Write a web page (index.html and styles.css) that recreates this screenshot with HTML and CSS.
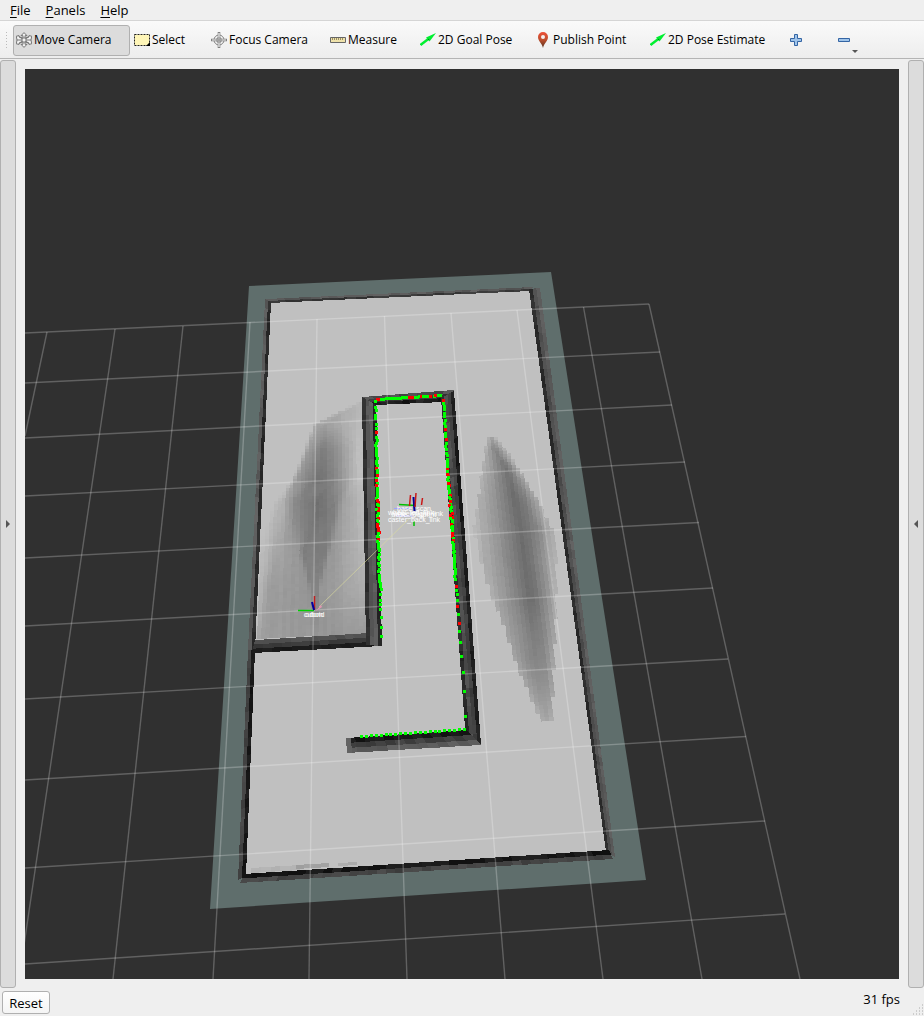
FILE: index.html
```html
<!DOCTYPE html>
<html lang="en">
<head>
<meta charset="utf-8">
<title>RViz</title>
<link rel="stylesheet" href="styles.css">
</head>
<body>
<nav class="menubar" aria-label="Main menu">
  <button class="menu" type="button"><u>F</u>ile</button>
  <button class="menu" type="button"><u>P</u>anels</button>
  <button class="menu" type="button"><u>H</u>elp</button>
</nav>
<div class="toolbar" role="toolbar" aria-label="Tools">
  <span class="grip"></span>
  <button class="tool tool-move active" type="button" aria-pressed="true">
    <svg class="icon" viewBox="0 0 16 16" fill="#f2f2f2" stroke="#6a6a6a" stroke-width=".9"><path d="M8 .6l3 3.100H9v2.500l4-1.500V3.600l2.700.6-.7 3.800.7 3.800-2.700.6v-1.100l-4-1.500v2.500h2l-3 3.100-3-3.100h2V9.800l-4 1.500v1.100L.3 11.800 1 8 .3 4.200 3 3.600v1.100l4 1.500V3.700H5z"/><path fill="none" d="M3 4.700L13 11.300M13 4.700L3 11.300M1 8h14"/><path d="M8 5.500L10.500 8 8 10.500 5.500 8z"/></svg>
    <span>Move Camera</span>
  </button>
  <button class="tool tool-select" type="button">
    <svg class="icon" viewBox="0 0 16 16"><path d="M.5 2.500h15v11H.5z" fill="#fff6b8" stroke="#222" stroke-dasharray="2 1"/><path d="M16 10v4h-4z" fill="#000"/></svg>
    <span>Select</span>
  </button>
  <button class="tool tool-focus" type="button">
    <svg class="icon" viewBox="0 0 16 16" fill="none" stroke="#808080"><circle cx="8" cy="8" r="5"/><circle cx="8" cy="8" r="2.500"/><path stroke-width="2.600" d="M8 0v16M0 8h16"/><path stroke="#f4f4f4" stroke-width="1.200" d="M8 1v14M1 8h14"/><path d="M8 5v6M5 8h6" stroke-width=".8"/></svg>
    <span>Focus Camera</span>
  </button>
  <button class="tool tool-measure" type="button">
    <svg class="icon" viewBox="0 0 16 16"><path d="M.5 5.500h15v5H.5z" fill="#efe2ab" stroke="#666"/><path d="M2.500 6v2M4.500 6v2M6.500 6v2M8.500 6v2M10.500 6v2M12.500 6v2" stroke="#998e62"/></svg>
    <span>Measure</span>
  </button>
  <button class="tool tool-goal" type="button">
    <svg class="icon" viewBox="0 0 16 16"><path d="M.5 13L8 7.200" stroke="#00f030" stroke-width="2.400"/><path d="M16 1L6 5.500l3.500 4z" fill="#00f030"/><path d="M7.500 6.800l2 .3-1 1.200z" fill="#087020"/></svg>
    <span>2D Goal Pose</span>
  </button>
  <button class="tool tool-publish" type="button">
    <svg class="icon" viewBox="0 0 16 16"><defs><linearGradient id="pin" x2="0" y2="1"><stop stop-color="#ef5138"/><stop offset=".5" stop-color="#bb4d2d"/><stop offset="1" stop-color="#54321f"/></linearGradient></defs><path d="M8 0a5 5 0 0 1 5 5c0 4-4 6-5 11-1-5-5-7-5-11a5 5 0 0 1 5-5z" fill="url(#pin)"/><circle cx="8" cy="5" r="2" fill="#f5eeee"/></svg>
    <span>Publish Point</span>
  </button>
  <button class="tool tool-estimate" type="button">
    <svg class="icon" viewBox="0 0 16 16"><path d="M.5 13L8 7.200" stroke="#00f030" stroke-width="2.400"/><path d="M16 1L6 5.500l3.500 4z" fill="#00f030"/><path d="M7.500 6.800l2 .3-1 1.200z" fill="#087020"/></svg>
    <span>2D Pose Estimate</span>
  </button>
  <button class="tool tool-add" type="button" aria-label="Add tool">
    <svg class="icon" viewBox="0 0 16 16"><path d="M6.500 2.500h3v4h4v3h-4v4h-3v-4h-4v-3h4z" fill="#9fc4ea" stroke="#3465a4"/></svg>
  </button>
  <button class="tool tool-remove" type="button" aria-label="Remove tool">
    <svg class="icon" viewBox="0 0 16 16"><path d="M2.500 6.500h11v3h-11z" fill="#9fc4ea" stroke="#3465a4"/></svg>
    <svg class="caret" viewBox="0 0 6 3"><path d="M0 0h6L3 3z" fill="#555"/></svg>
  </button>
</div>
<main class="workspace">
  <button class="dock" type="button" aria-label="Show left panels"><svg class="arrow" viewBox="0 0 4 8"><path d="M0 0l4 4-4 4z" fill="#555"/></svg></button>
  <div class="viewport">
    <svg class="scene" viewBox="25 69 874 910" preserveAspectRatio="xMidYMid slice" role="img" aria-label="3D map view">
      <path d="M249 286L551 272L646 880L210 909z" fill="#5f6e6c"/>
      <path d="M270 301L530 289L608 853L244 876L254 652z" fill="#c0c0c0"/>
      <g id="shade" shape-rendering="crispEdges"></g>
      <g id="walls" shape-rendering="crispEdges"></g>
      <g stroke="#fff" stroke-opacity=".24" stroke-width="1.400" id="grid"></g>
      <path d="M319 607L413 515" stroke="#dede9c" stroke-opacity=".6"/>
      <path d="M316 611l5-6 1 2z" fill="#e496b4"/>
      <g id="points" shape-rendering="crispEdges"></g>
      <g fill="none">
        <path d="M298 610.500h16" stroke="#00d000" stroke-width="1.500"/><path d="M314.500 596v14" stroke="#c02020" stroke-width="1.500"/><path d="M312 602l2 8" stroke="#0000a0" stroke-width="2"/>
        <path d="M399 504.500l17 1M414 521v5" stroke="#00c000" stroke-width="1.500"/><path d="M413.500 497l1 14" stroke="#000096" stroke-width="2"/><path d="M410.500 495l-1 11M416 493l-1 14M422.500 498l-1 7" stroke="#c81818" stroke-width="1.500"/><path d="M394 508.500h17M396 516h17" stroke="#a0a0ff"/>
      </g>
      <g class="frame-label">
        <text x="414" y="511">base_scan</text>
        <text x="411" y="515">wheel_left_link</text>
        <text x="418" y="516">wheel_right_link</text>
        <text x="414" y="517">base_footprint</text>
        <text x="414" y="522">caster_back_link</text>
        <text x="314" y="617">odom</text>
        <text x="314" y="617">cuboid</text>
      </g>
    </svg>
  </div>
  <button class="dock" type="button" aria-label="Show right panels"><svg class="arrow" viewBox="0 0 4 8"><path d="M4 0L0 4l4 4z" fill="#555"/></svg></button>
</main>
<footer class="statusbar">
  <button class="reset" type="button">Reset</button>
  <span class="fps">31 fps</span>
  <svg class="sizegrip" viewBox="0 0 12 12"><path d="M10 1h1M7 4h1M10 4h1M4 7h1M7 7h1M10 7h1M1 10h1M4 10h1M7 10h1M10 10h1" stroke="#aaa"/></svg>
</footer>
<script src="scene.js"></script>
</body>
</html>
```
FILE: styles.css
```css
* { box-sizing: border-box; }
body {
  margin: 0;
  min-height: 100vh;
  display: flex;
  flex-direction: column;
  background: #efefef;
  color: #000;
  font-family: "Open Sans", "Noto Sans", sans-serif;
  font-size: 12px;
  line-height: 16px;
}
button { font: inherit; color: inherit; background: none; border: 0; padding: 0; }
.menubar { display: flex; gap: 15px; padding: 2px 10px; height: 20px; flex: none; font-size: 13px; }
.menubar u { text-underline-offset: 2px; }
.toolbar {
  display: flex;
  align-items: center;
  flex: none;
  height: 39px;
  padding-top: 1px;
  padding-left: 5px;
  border-top: 1px solid #d5d5d5;
  border-bottom: 1px solid #b4b4b4;
  background: linear-gradient(#fafafa, #ededed);
}
.grip { width: 8px; height: 18px; flex: none; background: radial-gradient(circle, #bbb 0 1px, transparent 1px) 0 0 / 3px 3px; background-clip: content-box; padding-right: 4px; }
.tool {
  position: relative;
  display: flex;
  align-items: center;
  flex: none;
  gap: 2px;
  height: 31px;
  padding-left: 3px;
  border: 1px solid transparent;
  border-radius: 3px;
  white-space: nowrap;
}
.active { background: #dcdcdc; border-color: #b0b0b0; padding-left: 2px; }
.icon { width: 16px; height: 16px; flex: none; }
.tool-move { width: 117px; }
.tool-select { width: 77px; }
.tool-focus { width: 119px; }
.tool-measure { width: 90px; }
.tool-goal { width: 115px; }
.tool-publish { width: 115px; }
.tool-estimate { width: 138px; }
.tool-add { width: 48px; }
.tool-remove { width: 30px; }
.caret { position: absolute; right: 3px; bottom: 2px; width: 6px; height: 3px; }
.workspace { flex: 1; display: flex; gap: 9px; padding-top: 1px; }
.dock {
  flex: none;
  width: 16px;
  display: grid;
  place-items: center;
  background: #dcdcdc;
  border: 1px solid #b0b0b0;
  border-radius: 3px;
}
.arrow { width: 4px; height: 8px; }
.viewport { flex: 1; min-width: 0; display: flex; margin: 9px 0; background: #303030; }
.scene { flex: 1; min-width: 0; width: 100%; min-height: 300px; }
.frame-label { fill: #fff; font: 7px "Liberation Sans", sans-serif; text-anchor: middle; }
.statusbar { position: relative; flex: none; display: flex; justify-content: space-between; align-items: flex-start; height: 28px; padding: 3px 24px 2px 2px; font-size: 13px; }
.reset { width: 48px; height: 23px; border: 1px solid #b0b0b0; border-radius: 3px; background: linear-gradient(#fff, #f4f4f4); }
.sizegrip { position: absolute; right: 0; bottom: 0; width: 12px; height: 12px; }
```
FILE: scene.js
```javascript
const NS = 'http://www.w3.org/2000/svg';
const layer = id => document.getElementById(id);
let seed = 7;
const rnd = () => (seed = (seed * 16807) % 2147483647) / 2147483647;
const fix = n => n.toFixed(1);
function path(parent, d, attrs) {
  const el = document.createElementNS(NS, 'path');
  el.setAttribute('d', d);
  for (const k in attrs) el.setAttribute(k, attrs[k]);
  parent.appendChild(el);
}
const gray = g => { g = Math.round(g); return `rgb(${g},${g},${g})`; };
const poly = pts => 'M' + pts.map(p => fix(p[0]) + ' ' + fix(p[1])).join('L') + 'z';

/* ground grid */
const rows = [[333, 649, 304], [383, 660, 352], [438, 672, 405], [496, 685, 462], [558, 699, 522.5], [626, 713, 588], [699, 728, 659], [780, 746, 736.5], [868, 765, 821], [964, 785, 914]];
const cols = [[47, 332, 25, 436], [115, 329, 19, 979], [183, 326, 113, 979], [250, 322, 213, 979], [317, 319, 309, 979], [384.5, 316, 407, 979], [451, 313, 505, 979], [517, 310, 603, 979], [583.5, 307, 702, 979], [649, 304, 800, 979]];
rows.forEach(r => path(layer('grid'), `M25 ${r[0]}L${r[1]} ${r[2]}`));
cols.forEach(c => path(layer('grid'), `M${c[0]} ${c[1]}L${c[2]} ${c[3]}`));

/* projection of the unit square onto the ground */
const [A, B, C, D] = [[250, 322], [649, 304], [785, 914], [215, 951.5]];
const sx = A[0] - B[0] + C[0] - D[0], sy = A[1] - B[1] + C[1] - D[1];
const dx1 = B[0] - C[0], dy1 = B[1] - C[1], dx2 = D[0] - C[0], dy2 = D[1] - C[1];
const det = dx1 * dy2 - dx2 * dy1;
const g = (sx * dy2 - dx2 * sy) / det, h = (dx1 * sy - sx * dy1) / det;
function project(u, v) {
  const w = g * u + h * v + 1;
  return [((B[0] - A[0] + g * B[0]) * u + (D[0] - A[0] + h * D[0]) * v + A[0]) / w,
          ((B[1] - A[1] + g * B[1]) * u + (D[1] - A[1] + h * D[1]) * v + A[1]) / w];
}

/* shading tables: y, then x/gray stops */
const left = [
  [401, 360,192, 361,184, 362,182, 363,182, 364,182, 365,182, 367,182],
  [425, 312,192, 315,166, 325,158, 335,165, 345,172, 356,182, 367,186],
  [450, 304,192, 308,155, 322,125, 334,138, 348,165, 357,186, 367,190],
  [480, 292,192, 297,150, 319,112, 334,132, 348,162, 357,186, 367,190],
  [500, 276,192, 287,165, 294,138, 318,111, 335,130, 345,160, 367,188],
  [515, 267,192, 283,172, 293,140, 317,112, 333,128, 341,155, 367,187],
  [550, 260,190, 276,166, 298,149, 304,124, 326,124, 330,149, 367,182],
  [590, 258,188, 267,156, 308,149, 311,130, 317,132, 320,149, 367,172],
  [637, 256,176, 262,155, 308,152, 312,151, 317,151, 322,150, 367,150]];
const right = [
  [436, 487,190, 489,172, 491,168, 493,172, 495,190],
  [450, 485,180, 489,158, 495,132, 500,150, 506,178],
  [470, 482,176, 493,152, 507,112, 513,135, 519,172],
  [500, 478,174, 494,150, 515,104, 526,125, 537,165],
  [530, 474,182, 496,152, 521,105, 537,130, 553,176],
  [560, 480,176, 500,150, 525,104, 540,135, 556,180],
  [600, 493,172, 510,145, 531,104, 543,130, 556,172],
  [630, 505,165, 520,140, 533,118, 545,135, 555,165],
  [660, 515,164, 526,140, 537,128, 546,138, 554,165],
  [690, 527,165, 533,152, 541,142, 547,148, 553,160],
  [720, 540,180, 543,166, 546,160, 549,162, 552,178]];
function sample(table, x, y) {
  for (let i = 0; i + 1 < table.length; i++) {
    const a = table[i], b = table[i + 1];
    if (y < a[0] || y > b[0]) continue;
    const t = (y - a[0]) / (b[0] - a[0]);
    const s = a.map((n, k) => n + (b[k] - n) * t);
    for (let k = 1; k + 3 < s.length; k += 2)
      if (x >= s[k] && x < s[k + 2])
        return s[k + 1] + (s[k + 3] - s[k + 1]) * (x - s[k]) / (s[k + 2] - s[k]);
  }
  return null;
}
const NU = 120, NV = 180;
for (let i = 0; i < NU; i++) {
  const streak = (rnd() - .5) * 5;
  for (let j = 0; j < NV; j++) {
    const c = project((i + .5) / NU, (j + .5) / NV);
    const v = sample(c[0] < 400 ? left : right, c[0], c[1]);
    if (v === null) continue;
    path(layer('shade'), poly([project(i / NU, j / NV), project((i + 1.1) / NU, j / NV), project((i + 1.1) / NU, (j + 1.1) / NV), project(i / NU, (j + 1.1) / NV)]),
      { fill: gray(Math.min(192, v + streak + rnd() * 3)) });
  }
}

/* a wall between two edges, split across into toned layers */
function wall(p1, p2, q1, q2, tones, noise, step = 9) {
  const n = Math.max(1, Math.round(Math.hypot(p2[0] - p1[0], p2[1] - p1[1]) / step));
  const mix = (a, b, t) => [a[0] + (b[0] - a[0]) * t, a[1] + (b[1] - a[1]) * t];
  const m = tones.length;
  for (let k = 0; k < m; k++)
    for (let i = 0; i < n; i++) {
      const a0 = mix(p1, p2, i / n), a1 = mix(p1, p2, (i + 1) / n), b0 = mix(q1, q2, i / n), b1 = mix(q1, q2, (i + 1) / n);
      path(layer('walls'), poly([mix(a0, b0, k / m), mix(a1, b1, k / m), mix(a1, b1, (k + 1) / m), mix(a0, b0, (k + 1) / m)]),
        { fill: gray(tones[k] + (rnd() - .5) * noise) });
    }
}
wall([266, 299], [533, 287], [269, 303], [531, 291], [90, 56], 18);
wall([265, 299], [248, 650], [271, 302], [255, 650], [92, 42], 18);
wall([248, 650], [238, 880], [255, 650], [246, 876], [68, 24], 18);
wall([529, 289], [606, 852], [540, 288], [615, 857], [44, 78, 92], 14);
wall([244, 874], [609, 850], [240, 883], [613, 859], [24, 68], 18);
wall([255, 640], [370, 633], [252, 653], [382, 646], [82, 58, 28], 12);
wall([362, 397], [366, 645], [376, 397], [382, 646], [46, 86, 92, 34], 12);
wall([362, 397], [454, 390], [376, 405], [443, 402], [76, 60, 28], 26);
wall([441, 398], [466, 742], [454, 391], [481, 744], [44, 78, 64, 28], 18);
wall([346, 738], [466, 730], [347, 753], [481, 745], [24, 64, 92], 16);
wall([346, 738], [351, 738], [347, 753], [352, 753], [100], 10);
wall([251, 868], [300, 865], [251, 873], [300, 870], [180], 8);
wall([296, 865], [329, 863], [296, 869], [329, 867], [160], 14);
wall([338, 863], [357, 862], [338, 866], [357, 865], [170], 14);

/* laser hits */
function dot(x, y, red) {
  path(layer('points'), `M${Math.round(x) - 1} ${Math.round(y) - 1}h3v3h-3z`, { fill: red ? '#f00' : '#0f0' });
}
function scan(x1, y1, x2, y2, n, redShare, spread) {
  for (let i = 0; i < n; i++) {
    const t = (i + rnd() * .4) / n;
    dot(x1 + (x2 - x1) * t + (rnd() - .5) * spread, y1 + (y2 - y1) * t, rnd() < redShare);
  }
}
scan(376, 399, 442, 395, 28, .22, 0);
scan(375, 401, 376, 440, 9, .12, 1);
scan(376, 440, 377, 490, 20, .25, 2);
scan(377, 490, 378, 550, 32, .4, 2);
scan(378, 550, 380, 592, 14, .02, 2);
scan(443, 399, 447, 465, 20, .15, 1);
scan(447, 465, 450, 500, 20, .3, 2);
scan(450, 500, 453, 543, 24, .5, 2);
scan(453, 543, 455, 580, 16, .03, 1);
[594, 600, 604, 609, 617, 627, 636].forEach(y => dot(380 + (y - 594) / 40, y));
[[456, 586, 1], [456, 590], [457, 594], [457, 600], [457, 606, 1], [458, 614], [459, 623, 1], [459, 631], [460, 642], [461, 656], [463, 672], [464, 691], [465, 716], [464, 729]].forEach(p => dot(...p));
for (let i = 0; i < 22; i++) dot(361 + i * 4.9, 736 - i * .33);
```
